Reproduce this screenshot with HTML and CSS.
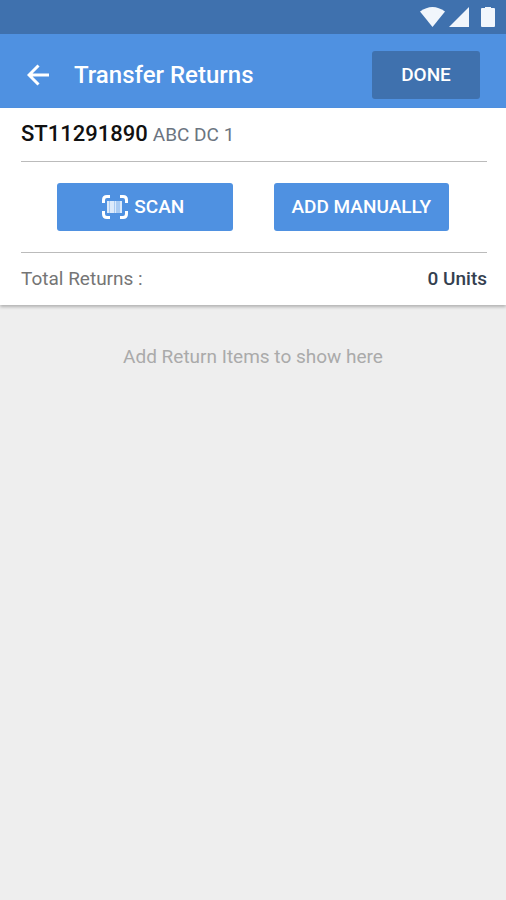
FILE: index.html
```html
<!DOCTYPE html>
<html lang="en">
<head>
  <meta charset="UTF-8">
  <meta name="viewport" content="width=device-width, initial-scale=1.0">
  <title>Transfer Returns</title>
  <link rel="stylesheet" href="styles.css">
</head>
<body>

  <div class="status-bar">
    <svg width="25" height="20" viewBox="0 0 25 20"><path d="M0 4.500Q12.500-4.500 25 4.500L12.500 20z"/></svg>
    <svg width="20" height="20" viewBox="0 0 20 20"><path d="M20 0v20H0z"/></svg>
    <svg class="battery" width="14" height="20" viewBox="0 0 14 20"><path d="M4 0h6v1h3q1 0 1 1v17q0 1-1 1H1q-1 0-1-1V2q0-1 1-1h3z"/></svg>
  </div>

  <header class="app-bar">
    <button class="back" type="button" aria-label="Back">
      <svg width="22" height="22" viewBox="0 0 22 22"><path d="M22 11H2M11.500 1.500L2 11l9.500 9.500"/></svg>
    </button>
    <h1 class="title">Transfer Returns</h1>
    <button class="btn done" type="button">DONE</button>
  </header>

  <main>
    <section class="card">
      <div class="transfer">
        <span class="transfer-id">ST11291890</span>
        <span class="transfer-place">ABC DC 1</span>
      </div>
      <div class="actions">
        <button class="btn scan" type="button">
          <svg width="26" height="24" viewBox="0 0 26 24">
            <path class="corners" d="M1.500 8V5q0-3.500 3.500-3.500h3M18 1.500h3q3.500 0 3.500 3.500v3M24.500 16v3q0 3.500-3.500 3.500h-3M8 22.500H5q-3.500 0-3.500-3.500v-3"/>
            <path class="code" d="M5 6h15v12H5z"/>
            <path class="bars" d="M5 6h2v12H5zM8 6h4v12H8zM13 6h1v12h-1zM18 6h2v12h-2z"/>
          </svg>
          SCAN
        </button>
        <button class="btn" type="button">ADD MANUALLY</button>
      </div>
      <div class="total">
        <span>Total Returns :</span>
        <span class="total-units">0 Units</span>
      </div>
    </section>

    <p class="empty">Add Return Items to show here</p>
  </main>

</body>
</html>
```

FILE: styles.css
```css
* {
  margin: 0;
  padding: 0;
  box-sizing: border-box;
}

body {
  min-height: 100vh;
  background: #eee;
  font-family: Roboto, "Liberation Sans", sans-serif;
  font-size: 19px;
  line-height: 24px;
}

.status-bar {
  display: flex;
  justify-content: flex-end;
  gap: 4px;
  height: 34px;
  padding: 7px 11px 0 0;
  background: #3f71ae;
  fill: #f1f6fc;
}

.battery {
  margin-left: 8px;
}

.app-bar {
  display: flex;
  align-items: center;
  height: 74px;
  padding: 8px 26px 0 27px;
  background: #4f91e1;
  color: #fff;
}

.back {
  display: flex;
  margin-right: 25px;
  border: 0;
  background: none;
  cursor: pointer;
}

.back svg {
  fill: none;
  stroke: #fff;
  stroke-width: 3;
}

.title {
  flex: 1;
  font-size: 24px;
  font-weight: 500;
  line-height: 32px;
}

.btn {
  display: flex;
  align-items: center;
  justify-content: center;
  height: 48px;
  border: 0;
  border-radius: 3px;
  background: #4f91e1;
  color: #fff;
  font: 500 19px/24px Roboto, "Liberation Sans", sans-serif;
  cursor: pointer;
}

.done {
  width: 108px;
  background: #3f71ae;
}

.card {
  padding: 0 19px 0 21px;
  background: #fff;
  box-shadow: 0 2px 3px rgba(0, 0, 0, 0.25);
}

.transfer {
  display: flex;
  align-items: baseline;
  gap: 5px;
  padding: 14px 0;
}

.transfer-id {
  color: #111;
  font-size: 22px;
  font-weight: 500;
}

.transfer-place {
  color: #6b7480;
}

.actions {
  display: grid;
  grid-template-columns: 1fr 1fr;
  gap: 41px;
  padding: 21px 38px 21px 36px;
  border-top: 1px solid #bbb;
  border-bottom: 1px solid #bbb;
}

.scan {
  gap: 6px;
  padding-right: 3px;
}

.scan .corners {
  fill: none;
  stroke: #fff;
  stroke-width: 3;
}

.scan .code {
  fill: #a9cbf3;
}

.scan .bars {
  fill: #dceafb;
}

.total {
  display: flex;
  justify-content: space-between;
  padding: 14px 0;
  color: #757575;
}

.total-units {
  color: #34404f;
  font-weight: 500;
}

.empty {
  padding: 40px 20px;
  color: #aaa;
  text-align: center;
}
```
